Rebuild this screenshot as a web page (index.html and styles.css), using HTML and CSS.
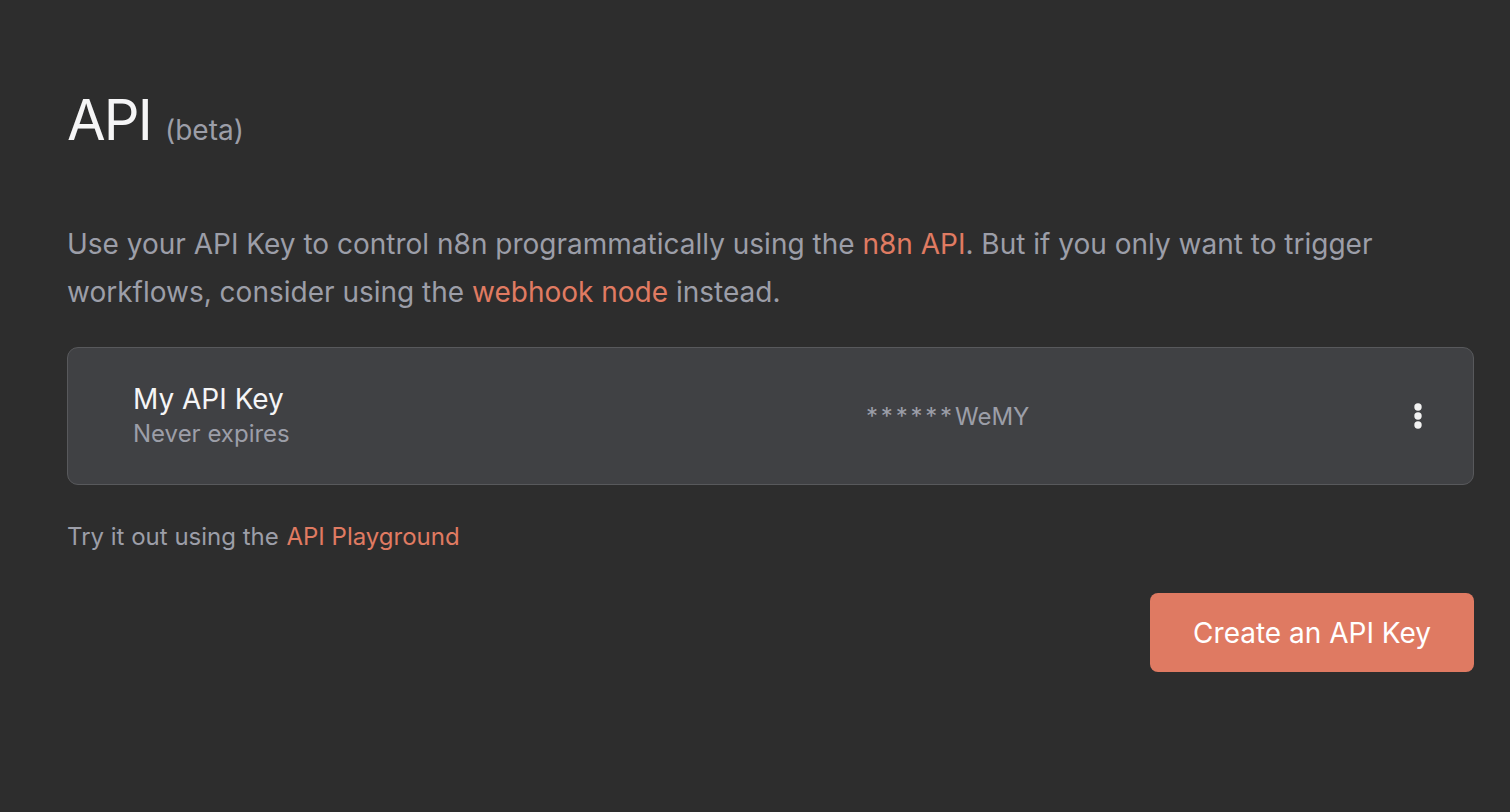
FILE: index.html
```html
<!DOCTYPE html>
<html>
<head>
<meta charset="utf-8">
<link rel="stylesheet" href="styles.css">
</head>
<body>
<main class="page">
  <h1 class="title">API <span class="beta">(beta)</span></h1>
  <p class="intro">Use your API Key to control n8n programmatically using the <a class="link" href="#">n8n API</a>. But if you only want to trigger workflows, consider using the <a class="link" href="#">webhook node</a> instead.</p>
  <div class="card">
    <div class="card-info">
      <div class="card-name">My API Key</div>
      <div class="card-sub">Never expires</div>
    </div>
    <div class="card-key"><span class="mask">******</span>WeMY</div>
    <div class="card-menu">
      <svg width="12" height="30" viewBox="0 0 12 30"><circle cx="6" cy="6" r="3.7" fill="#f2f2f2"/><circle cx="6" cy="15" r="3.7" fill="#f2f2f2"/><circle cx="6" cy="24" r="3.7" fill="#f2f2f2"/></svg>
    </div>
  </div>
  <p class="try">Try it out using the <a class="link try-link" href="#">API Playground</a></p>
  <div class="actions">
    <button class="btn">Create an API Key</button>
  </div>
</main>
</body>
</html>
```

FILE: styles.css
```css
html, body {
  margin: 0;
  padding: 0;
  background: #2d2d2d;
}
body {
  font-family: Inter, "Noto Sans", sans-serif;
  color: #9c9ea8;
}
.page {
  padding: 80px 36px 0 67px;
}
.title {
  margin: 0;
  font-size: 56px;
  font-weight: 400;
  line-height: 80px;
  color: #f5f5f6;
  letter-spacing: -1.8px;
}
.beta {
  font-size: 28px;
  color: #9c9ea8;
  margin-left: 0;
  letter-spacing: 0;
}
.intro {
  margin: 50px 0 0;
  font-size: 28px;
  line-height: 48px;
}
.link {
  color: #e07b62;
  text-decoration: none;
}
.card {
  margin-top: 31px;
  height: 136px;
  border: 1px solid #58595c;
  border-radius: 11px;
  background: #404144;
  display: flex;
  align-items: center;
  padding: 0 49px 0 65px;
}
.card-info {
  flex: 0 0 733px;
}
.card-name {
  font-size: 28px;
  color: #f5f5f6;
  line-height: 36px;
}
.card-sub {
  font-size: 24px;
  color: #9c9ea8;
  line-height: 34px;
}
.card-key {
  flex: 1;
  font-size: 24px;
  color: #9c9ea8;
}
.mask {
  letter-spacing: 2.8px;
}
.card-menu {
  display: flex;
  align-items: center;
}
.try {
  margin: 37px 0 0;
  font-size: 24px;
  line-height: 30px;
}
.try-link {
  margin-left: 1px;
}
.actions {
  display: flex;
  justify-content: flex-end;
  margin-top: 41px;
}
.btn {
  font-family: inherit;
  font-size: 28px;
  color: #ffffff;
  background: #df7a62;
  border: none;
  border-radius: 8px;
  height: 79px;
  padding: 0 43px;
}
```
